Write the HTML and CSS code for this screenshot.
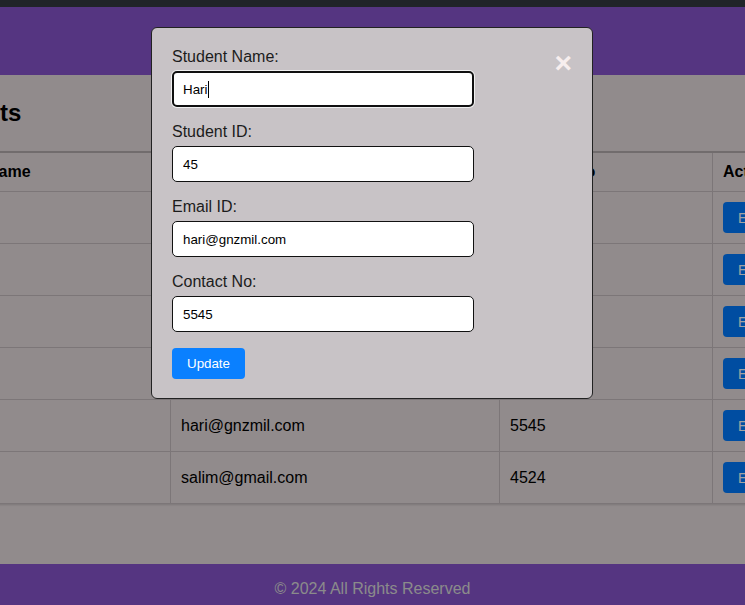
FILE: index.html
```html
<!DOCTYPE html>
<html lang="en">
<head>
<meta charset="utf-8">
<title>Students</title>
<link rel="stylesheet" href="styles.css">
</head>
<body class="modal-open">
  <div class="topbar"></div>
  <header class="site-header"></header>
  <main class="main">
    <div class="content">
      <h2 class="title">List of Students</h2>
      <table class="students">
        <colgroup>
          <col class="c-id"><col class="c-name"><col class="c-email"><col class="c-contact"><col class="c-actions">
        </colgroup>
        <thead>
          <tr><th>ID</th><th>Student Name</th><th>Email ID</th><th>Contact No</th><th>Actions</th></tr>
        </thead>
        <tbody>
          <tr><td>12</td><td>Ravi</td><td>ravi@gmail.com</td><td>9876</td><td><button class="btn btn-edit">Edit</button><button class="btn btn-del">Delete</button></td></tr>
          <tr><td>23</td><td>Priya</td><td>priya@gmail.com</td><td>8765</td><td><button class="btn btn-edit">Edit</button><button class="btn btn-del">Delete</button></td></tr>
          <tr><td>31</td><td>Arun</td><td>arun@gmail.com</td><td>7654</td><td><button class="btn btn-edit">Edit</button><button class="btn btn-del">Delete</button></td></tr>
          <tr><td>38</td><td>Meena</td><td>meena@gmail.com</td><td>6543</td><td><button class="btn btn-edit">Edit</button><button class="btn btn-del">Delete</button></td></tr>
          <tr><td>45</td><td>Hari</td><td>hari@gnzmil.com</td><td>5545</td><td><button class="btn btn-edit">Edit</button><button class="btn btn-del">Delete</button></td></tr>
          <tr><td>52</td><td>Salim</td><td>salim@gmail.com</td><td>4524</td><td><button class="btn btn-edit">Edit</button><button class="btn btn-del">Delete</button></td></tr>
        </tbody>
      </table>
    </div>
  </main>
  <footer class="site-footer">© 2024 All Rights Reserved</footer>

  <div class="overlay"></div>
  <div class="modal">
    <span class="close">&times;</span>
    <form class="edit-form">
      <div class="field">
        <label class="label">Student Name:</label>
        <div class="input-wrap">
          <input class="input focused" type="text" value="Hari">
          <span class="caret"></span>
        </div>
      </div>
      <div class="field">
        <label class="label">Student ID:</label>
        <input class="input" type="text" value="45">
      </div>
      <div class="field">
        <label class="label">Email ID:</label>
        <input class="input" type="text" value="hari@gnzmil.com">
      </div>
      <div class="field">
        <label class="label">Contact No:</label>
        <input class="input" type="text" value="5545">
      </div>
      <button class="update" type="button">Update</button>
    </form>
  </div>
</body>
</html>
```

FILE: styles.css
```css
html, body {
  margin: 0;
  padding: 0;
}

body {
  font-family: "Liberation Sans", Arial, sans-serif;
  background: #e6ddde;
  color: #000;
}

body.modal-open {
  overflow: hidden;
}

.topbar {
  height: 7px;
  background: #343a40;
}

.site-header {
  height: 68px;
  background: #8754cd;
}

.main {
  min-height: 489px;
  overflow: hidden;
}

.content {
  margin-left: -180px;
  padding: 0 20px;
  width: max-content;
}

.title {
  margin: 24px 0;
  font-size: 24px;
  font-weight: bold;
  line-height: 27.6px;
}

.students {
  border-collapse: collapse;
  table-layout: fixed;
  width: 1006px;
  font-size: 16px;
  box-shadow: 0 1px 2px rgba(0, 0, 0, 0.15);
}

.c-id { width: 72px; }
.c-name { width: 258px; }
.c-email { width: 329px; }
.c-contact { width: 213px; }
.c-actions { width: 134px; }

.students th,
.students td {
  border: 1px solid #c4bcbe;
  padding: 10px;
  text-align: left;
  vertical-align: middle;
  white-space: nowrap;
}

.students th {
  border-top: 2px solid #b3abad;
  font-weight: bold;
  line-height: 18.4px;
}

.students td {
  line-height: 31px;
  height: 31px;
}

.btn {
  display: inline-block;
  vertical-align: top;
  box-sizing: border-box;
  height: 31px;
  font-family: "Liberation Sans", Arial, sans-serif;
  font-size: 14px;
  line-height: 16px;
  padding: 0 15px;
  border: 0;
  border-radius: 4px;
  color: #fff;
  margin-right: 5px;
}

.btn-edit { background: #007bff; }
.btn-del { background: #dc3545; }

.site-footer {
  background: #8754cd;
  color: #dcdcdc;
  text-align: center;
  font-size: 16px;
  line-height: 18px;
  padding: 16px 0 7px;
}

.overlay {
  position: fixed;
  inset: 0;
  background: rgba(0, 0, 0, 0.37);
}

.modal {
  position: fixed;
  top: 27px;
  left: 50%;
  margin-left: -221.5px;
  width: 442px;
  box-sizing: border-box;
  background: #c8c3c6;
  border: 1px solid #222;
  border-radius: 6px;
  padding: 20px 20px 19px;
}

.close {
  position: absolute;
  top: 20px;
  right: 20px;
  font-size: 30px;
  line-height: 1;
  font-weight: bold;
  color: #f7eeee;
}

.field {
  margin-bottom: 16px;
}

.label {
  display: block;
  font-size: 16px;
  line-height: 18px;
  color: #1c1c1c;
  margin-bottom: 5px;
}

.input-wrap {
  position: relative;
  width: 302px;
}

.input {
  display: block;
  box-sizing: border-box;
  width: 302px;
  height: 36px;
  padding: 0 10px;
  border: 1px solid #111;
  border-radius: 5px;
  background: #fff;
  font-family: "Liberation Sans", Arial, sans-serif;
  font-size: 13.33px;
  color: #000;
  outline: none;
}

.input.focused {
  border: 2px solid #101010;
  padding: 0 9px;
  box-shadow: 0 0 0 1px #f0f0f0;
}

.caret {
  position: absolute;
  left: 36px;
  top: 10px;
  width: 1px;
  height: 17px;
  background: #000;
}

.update {
  display: block;
  height: 31px;
  padding: 0 15px;
  border: 0;
  border-radius: 4px;
  background: #0a80ff;
  color: #fff;
  font-family: "Liberation Sans", Arial, sans-serif;
  font-size: 13.33px;
}
```
